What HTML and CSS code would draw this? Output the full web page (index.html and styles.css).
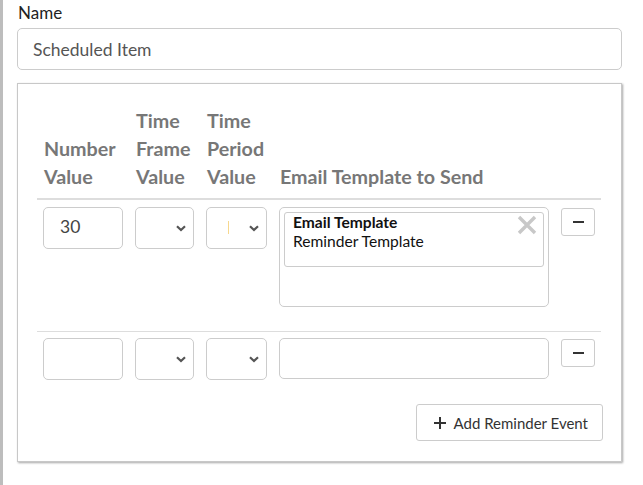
FILE: index.html
```html
<!DOCTYPE html>
<html lang="en">
<head>
    <meta charset="UTF-8">
    <title>Scheduled Item</title>
    <link rel="stylesheet" href="styles.css">
</head>
<body>
    <label class="field-label" for="nameInput">Name</label>
    <input type="text" id="nameInput" class="name-input" value="Scheduled Item">

    <div class="panel">
        <div class="grid-row header-row">
            <div class="head">Number<br>Value</div>
            <div class="head">Time<br>Frame<br>Value</div>
            <div class="head">Time<br>Period<br>Value</div>
            <div class="head">Email Template to Send</div>
            <div></div>
        </div>

        <div class="grid-row event-row first">
            <div class="box number">30</div>
            <div class="box select">
                <svg class="chevron" width="10" height="7" viewBox="0 0 10 7"><path d="M1 1.2 L5 5 L9 1.2" fill="none" stroke="#555" stroke-width="2.2"/></svg>
            </div>
            <div class="box select">
                <span class="caret"></span>
                <svg class="chevron" width="10" height="7" viewBox="0 0 10 7"><path d="M1 1.2 L5 5 L9 1.2" fill="none" stroke="#555" stroke-width="2.2"/></svg>
            </div>
            <div class="box multi">
                <div class="tag">
                    <div class="tag-title">Email Template</div>
                    <div class="tag-name">Reminder Template</div>
                    <svg class="tag-remove" width="20" height="20" viewBox="0 0 20 20"><path d="M2 2 L18 18 M18 2 L2 18" stroke="#c8c8c8" stroke-width="3.4"/></svg>
                </div>
            </div>
            <button class="minus-btn"><span></span></button>
        </div>

        <div class="grid-row event-row second">
            <div class="box number"></div>
            <div class="box select">
                <svg class="chevron" width="10" height="7" viewBox="0 0 10 7"><path d="M1 1.2 L5 5 L9 1.2" fill="none" stroke="#555" stroke-width="2.2"/></svg>
            </div>
            <div class="box select">
                <svg class="chevron" width="10" height="7" viewBox="0 0 10 7"><path d="M1 1.2 L5 5 L9 1.2" fill="none" stroke="#555" stroke-width="2.2"/></svg>
            </div>
            <div class="box multi empty"></div>
            <button class="minus-btn"><span></span></button>
        </div>

        <div class="actions">
            <button class="add-btn">
                <svg width="12" height="12" viewBox="0 0 12 12"><path d="M6 0 V12 M0 6 H12" stroke="#333" stroke-width="2"/></svg>
                Add Reminder Event
            </button>
        </div>
    </div>
</body>
</html>
```

FILE: styles.css
```css
body {
    font-family: Lato, 'Liberation Sans', sans-serif;
    margin: 0;
    padding: 3px 21px 0 14px;
    min-height: 100vh;
    box-sizing: border-box;
    border-left: 3px solid #bdbdbd;
    color: #222;
    background: #fff;
}

.field-label {
    display: block;
    font-size: 17px;
    line-height: 20px;
    padding-left: 1px;
    color: #222;
}

.name-input {
    display: block;
    width: 100%;
    box-sizing: border-box;
    height: 42px;
    margin-top: 5px;
    padding: 0 15px;
    font-family: inherit;
    font-size: 17.5px;
    color: #555;
    border: 1px solid #ccc;
    border-radius: 5px;
    outline: none;
}

.panel {
    margin-top: 13px;
    border: 1px solid #c8c8c8;
    box-shadow: 1px 1px 2px rgba(0, 0, 0, 0.35);
    padding: 23px 20px 20px 19px;
    background: #fff;
}

.grid-row {
    display: grid;
    grid-template-columns: 80px 59px 61px 270px 34px;
    column-gap: 12px;
    padding: 0 6px;
}

.header-row {
    align-items: end;
    padding-bottom: 7px;
    border-bottom: 2px solid #ddd;
}

.head {
    font-size: 19.7px;
    line-height: 28px;
    font-weight: bold;
    color: #777;
    padding-left: 1px;
}

.event-row {
    align-items: start;
}

.event-row.first {
    padding-top: 7px;
    padding-bottom: 24px;
    border-bottom: 1px solid #ddd;
}

.event-row.second {
    padding-top: 6px;
}

.box {
    box-sizing: border-box;
    height: 42px;
    border: 1px solid #ccc;
    border-radius: 5px;
    background: #fff;
}

.number {
    padding: 0 16px;
    font-size: 17.5px;
    line-height: 38px;
    color: #444;
}

.select {
    display: flex;
    align-items: center;
    justify-content: flex-end;
    padding-right: 7px;
    position: relative;
}

.caret {
    position: absolute;
    left: 21px;
    top: 13px;
    width: 1px;
    height: 13px;
    background: #f7d88e;
}

.multi {
    height: 100px;
    padding: 4px;
}

.multi.empty {
    height: 41px;
}

.tag {
    position: relative;
    height: 55px;
    box-sizing: border-box;
    border: 1px solid #ccc;
    border-radius: 3px;
    padding: 0 8px;
    font-size: 15.6px;
    line-height: 19px;
    color: #111;
}

.tag-title {
    font-weight: bold;
}

.tag-remove {
    position: absolute;
    right: 6px;
    top: 2px;
}

.minus-btn {
    height: 28px;
    margin-top: 1px;
    padding: 0;
    border: 1px solid #ccc;
    border-radius: 3px;
    background: #fff;
    display: flex;
    align-items: center;
    justify-content: center;
}

.minus-btn span {
    width: 11px;
    height: 2px;
    background: #333;
}

.actions {
    display: flex;
    justify-content: flex-end;
    margin-top: 24px;
    margin-right: -2px;
}

.add-btn {
    display: flex;
    align-items: center;
    gap: 8px;
    height: 37px;
    padding: 0 14px 0 17px;
    font-family: inherit;
    font-size: 15px;
    color: #333;
    background: #fff;
    border: 1px solid #ccc;
    border-radius: 3px;
}
```
